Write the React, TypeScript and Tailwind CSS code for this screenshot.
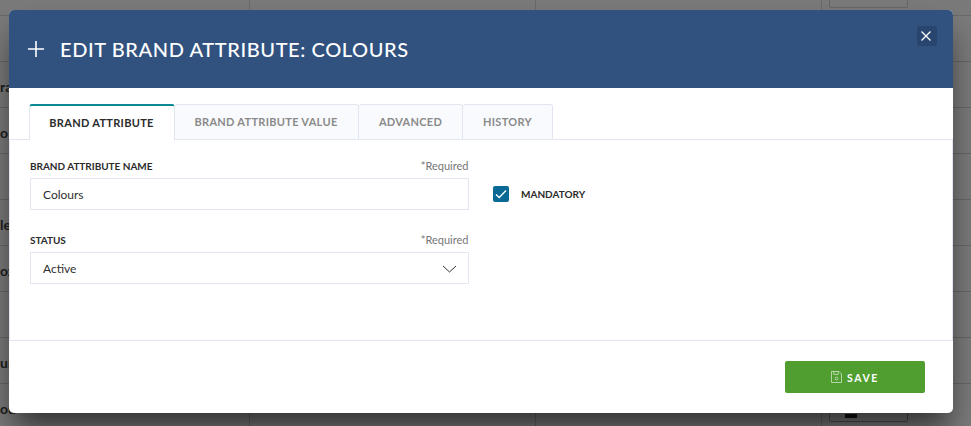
const rows = ["", "ra", "o", "", "le", "ox", "", "ur", "ou"];

function Background() {
  return (
    <div className="w-[971px] h-[426px] overflow-hidden flex flex-col bg-[#7a7a7a] text-[#1c1c1c] text-[14px] font-bold">
      <div className="h-[16px] shrink-0 flex border-b border-[#696969]">
        <div className="w-[250px] border-r border-[#696969]" />
        <div className="w-[286px] border-r border-[#696969]" />
        <div className="w-[286px] border-r border-[#696969]" />
        <div className="pl-[7px]">
          <div className="w-[79px] h-[8px] border border-t-0 border-[#666666] rounded-b-[2px]" />
        </div>
      </div>
      {rows.map((t, i) => (
        <div key={i} className="h-[46px] shrink-0 flex border-b border-[#666666]">
          <div className="w-[250px] h-full border-r border-[#666666] flex items-center pt-[3px]">
            <span>{t}</span>
          </div>
          <div className="w-[286px] h-full border-r border-[#666666]" />
          <div className="w-[286px] h-full border-r border-[#666666]" />
          <div className="pl-[7px] pt-[8px]">
            {i === 8 && (
              <div className="w-[79px] h-[30px] border border-[#4f4f4f] rounded-[2px] flex justify-start pl-[15px] pt-[21px]">
                <div className="w-[12px] h-[4px] bg-[#111111]" />
              </div>
            )}
          </div>
        </div>
      ))}
    </div>
  );
}

function Field({ label, children }: { label: string; children: React.ReactNode }) {
  return (
    <div className="w-[439px]">
      <div className="h-[14px] flex items-center justify-between mb-[5px]">
        <span className="text-[10px] font-bold tracking-[-0.03px] text-[#2b2b2b]">{label}</span>
        <span className="text-[11px] pt-[1px] pr-[0.5px] text-[#777777]">*Required</span>
      </div>
      {children}
    </div>
  );
}

export default function App() {
  return (
    <div className="relative w-[971px] h-[426px] overflow-hidden" style={{ fontFamily: "Lato, sans-serif" }}>
      <Background />
      <div className="absolute left-[9px] top-[10px] w-[944px] h-[403px] bg-white rounded-[5px] overflow-hidden flex flex-col shadow-[0_20px_30px_-5px_rgba(0,0,0,0.6)]">
        <div className="h-[78px] shrink-0 bg-[#31527f] flex items-center pl-[19px] relative">
          <svg width="16" height="16" viewBox="0 0 16 16" className="mr-[16px]">
            <path d="M8 0V16M0 8H16" stroke="#fff" strokeWidth="1.6" fill="none" />
          </svg>
          <span className="text-[20px] font-medium tracking-[0.6px] text-white">EDIT BRAND ATTRIBUTE: COLOURS</span>
          <div className="absolute left-[908px] top-[16px] w-[20px] h-[20px] rounded-[3px] bg-[#284570] flex items-center justify-center pr-[2px]">
            <svg width="10" height="10" viewBox="0 0 10 10">
              <path d="M0.5 0.5L9.5 9.5M9.5 0.5L0.5 9.5" stroke="#fff" strokeWidth="1.3" fill="none" />
            </svg>
          </div>
        </div>
        <div className="h-[36px] mt-[16px] shrink-0 flex items-end pl-[20px] border-b border-[#e1e6f0] text-[11px] font-bold tracking-[0.3px]">
          <div className="w-[146px] h-[36px] mb-[-1px] bg-white border-x border-[#e1e6f0] border-t-2 border-t-[#0b8a96] rounded-t-[3px] flex items-center justify-center pt-[1px] pr-[1px] text-[#2b2b2b]">BRAND ATTRIBUTE</div>
          <div className="w-[184px] h-[35px] bg-[#f9fafd] border-t border-r border-[#e1e6f0] rounded-t-[3px] flex items-center justify-center pt-[1px] pr-[1px] text-[#8a8a8a]">BRAND ATTRIBUTE VALUE</div>
          <div className="w-[104px] h-[35px] bg-[#f9fafd] border-t border-r border-[#e1e6f0] rounded-t-[3px] flex items-center justify-center pt-[1px] text-[#8a8a8a]">ADVANCED</div>
          <div className="w-[90px] h-[35px] bg-[#f9fafd] border-t border-r border-[#e1e6f0] rounded-t-[3px] flex items-center justify-center pt-[1px] text-[#8a8a8a]">HISTORY</div>
        </div>
        <div className="h-[201px] shrink-0 border-b border-l border-r border-[#e1e6f0] flex pl-[20px] pt-[19px]">
          <div className="flex flex-col gap-[23px]">
            <Field label="BRAND ATTRIBUTE NAME">
              <div className="h-[32px] border border-[#e1e6f0] flex items-center pl-[12px] pt-[1px] text-[12px] text-[#2f2f2f]">Colours</div>
            </Field>
            <Field label="STATUS">
              <div className="h-[32px] border border-[#e1e6f0] flex items-center justify-between pl-[12px] pr-[11px] pt-[1px] text-[12px] text-[#2f2f2f]">
                Active
                <svg width="15" height="8" viewBox="0 0 15 8">
                  <path d="M1 1L7.5 7L14 1" stroke="#333" strokeWidth="1" fill="none" />
                </svg>
              </div>
            </Field>
          </div>
          <div className="ml-[24px] mt-[19px] h-[32px] flex items-center">
            <div className="w-[16px] h-[16px] rounded-[2px] bg-[#0b6a94] flex items-center justify-center">
              <svg width="12" height="10" viewBox="0 0 12 10">
                <path d="M1 5.5L4.2 8.5L11 1.5" stroke="#fff" strokeWidth="1.3" fill="none" />
              </svg>
            </div>
            <span className="ml-[12px] text-[10px] font-bold text-[#2b2b2b]">MANDATORY</span>
          </div>
        </div>
        <div className="flex-1 flex justify-end items-start pt-[20px] pr-[28px]">
          <div className="w-[140px] h-[32px] bg-[#4f9e2f] rounded-[2px] flex items-center justify-center pt-[3px] text-white text-[10.5px] font-bold tracking-[1.6px]">
            <svg width="11" height="12" viewBox="0 0 11 12" className="mr-[5px] mb-[3px]">
              <path d="M0.5 0.5H8L10.5 3V11.5H0.5Z M2.8 0.5V3.4H7.2V0.5" stroke="#cfe3c5" strokeWidth="0.8" fill="none" />
              <circle cx="5.5" cy="7.5" r="1.4" stroke="#cfe3c5" strokeWidth="0.8" fill="none" />
            </svg>
            SAVE
          </div>
        </div>
      </div>
    </div>
  );
}
